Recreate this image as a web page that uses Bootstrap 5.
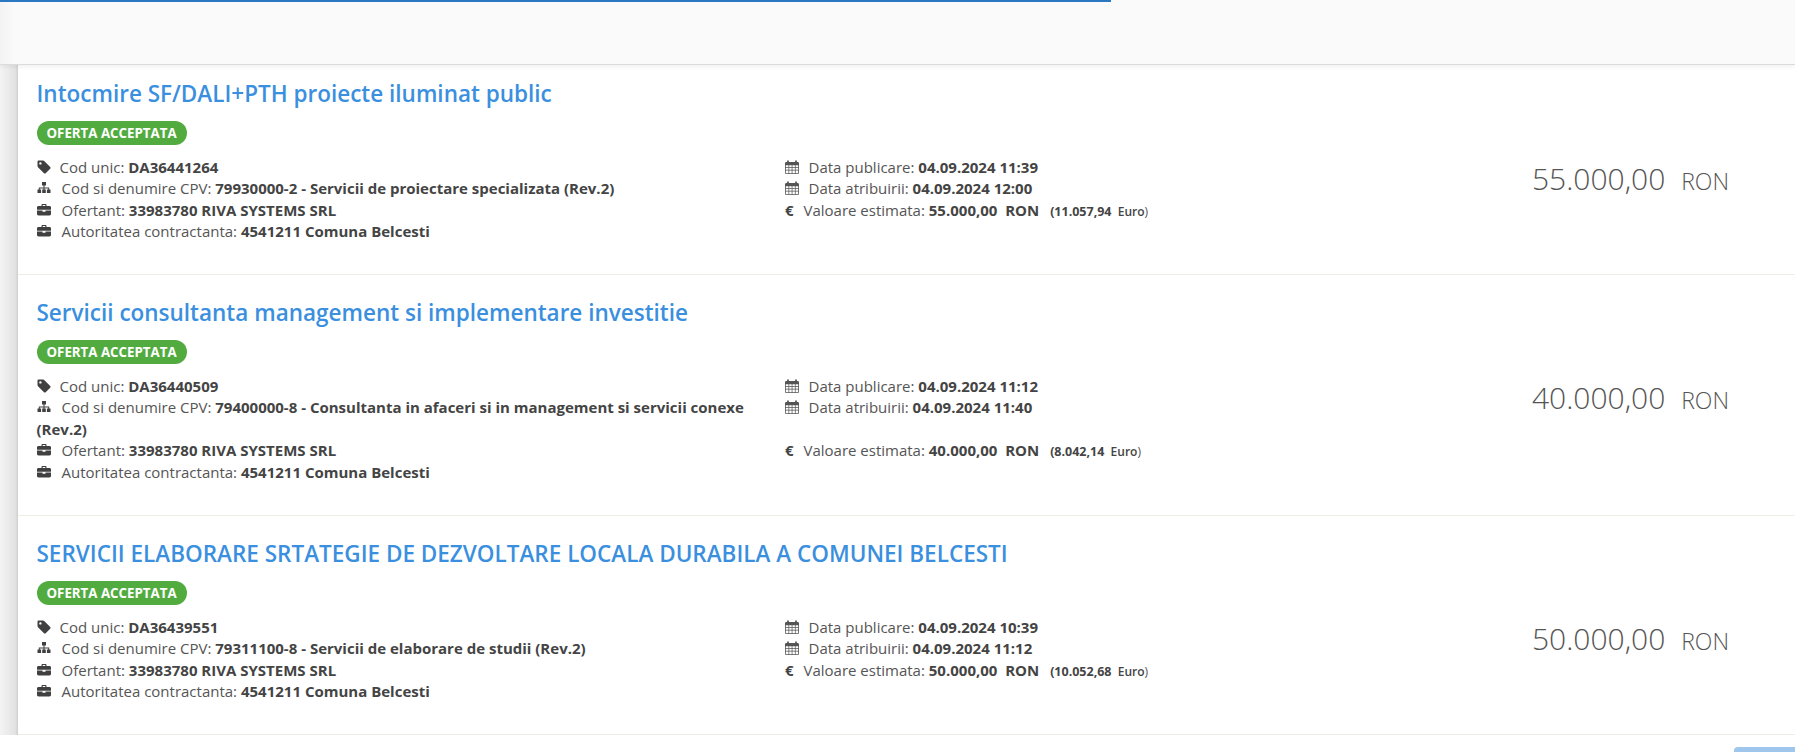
<!DOCTYPE html>
<html lang="ro">
<head>
    <meta charset="UTF-8">
    <title>Achizitii directe</title>
    <link href="https://cdn.jsdelivr.net/npm/bootstrap@5.3.0/dist/css/bootstrap.min.css" rel="stylesheet">
    <style>
        html, body { height: 100%; overflow: hidden; }
        body { font-family: "Open Sans", "Liberation Sans", sans-serif; font-size: 15px; line-height: 21.4px; color: #555; background: #fff; }
        .top-strip { height: 65px; background: linear-gradient(to right, #f3f3f3, #fafafa 14px); border-bottom: 1px solid #dcdcdc; box-shadow: 0 2px 4px rgba(0,0,0,.06); position: relative; z-index: 2; }
        .load-bar { width: 1111px; height: 2px; background: #2b78c2; }
        .side-strip { width: 18px; flex: none; background: linear-gradient(to right, #f4f4f4, #e2e2e2 85%, #cfcfcf); }
        .result-item { height: 219px; padding: 23.5px 0 0 18.500px; border-bottom: 1px solid #eeeee6; }
        .result-item:first-child { height: 210px; padding-top: 14.5px; }
        .result-item.tall { height: 241px; }
        .result-title { font-size: 22.500px; line-height: 28px; font-weight: 600; color: #3a8fde; text-decoration: none; display: block; }
        .status-pill { display: inline-block; height: 24px; padding: 0 10px; margin-top: 13.500px; border-radius: 12px; background: #52ab3f; color: #fff; font-size: 13.300px; line-height: 24px; font-weight: 700; }
        .facts { display: grid; grid-template-columns: 748.500px 1fr; margin-top: 12px; }
        .facts > div { padding-right: 4px; }
        .facts b { font-weight: 700; color: #444; }
        .ico { width: 14px; height: 14px; fill: #404040; vertical-align: -1px; margin-right: 11px; }
        .ico.tag-ico { margin-right: 9px; }
        .ico.cal-ico { fill: #555; margin-right: 9.500px; }
        .eur { font-weight: 700; color: #444; margin-right: 6px; }
        .tiny { font-size: 12px; line-height: 1; margin-left: 7px; }
        .tiny b { font-size: 12.500px; }
        .tiny b.unit { font-size: 12px; font-weight: 600; }
        .price-col { width: 500px; flex: none; padding: 80px 66px 0 0; text-align: right; font-weight: 300; color: #555; font-size: 30px; line-height: 38px; }
        .price-col small { font-size: 23px; margin-left: 8px; }
        .scroll-btn { position: fixed; right: 0; bottom: 0; width: 61px; height: 5px; background: #9fc6ec; border-top-left-radius: 4px; }
    </style>
</head>
<body>
    <svg width="0" height="0" class="position-absolute">
        <symbol id="i-tag" viewBox="0 0 14 14"><path fill-rule="evenodd" d="M.5 1.500a1 1 0 0 1 1-1h4.600c.4 0 .8.2 1.100.5l6 6c.5.5.5 1.200 0 1.700l-4.500 4.500c-.5.5-1.200.5-1.700 0l-6-6a1.600 1.600 0 0 1-.5-1.100zM3.400 2.200a1.200 1.200 0 1 0 0 2.400 1.200 1.200 0 0 0 0-2.400z"/></symbol>
        <symbol id="i-map" viewBox="0 0 14 14"><path d="M5 1h4v3.400H7.500v2h4.700v2.200h1.300V12H9.900V8.600h1.300V7.400h-3.700v1.200h1.300V12H5.200V8.600h1.300V7.400H2.800v1.200h1.300V12H.5V8.600h1.300V6.400h4.700v-2H5z"/></symbol>
        <symbol id="i-case" viewBox="0 0 14 14"><path fill-rule="evenodd" d="M4.500 2.900V2c0-.6.500-1 1-1h3c.5 0 1 .4 1 1v.900h3c.8 0 1.500.6 1.500 1.300v2.600H0V4.200c0-.7.700-1.300 1.500-1.300zM5.700 2.900h2.600v-.8H5.700zM0 7.600h5.500v1.200h3V7.600H14v3.500c0 .8-.7 1.400-1.500 1.400h-11C.7 12.500 0 11.900 0 11.100z"/></symbol>
        <symbol id="i-cal" viewBox="0 0 14 14"><path fill-rule="evenodd" d="M3 .3c.5 0 .9.4.9.9V2h6.200v-.8c0-.5.400-.9.900-.9s.9.4.9.9V2h.8c.7 0 1.300.6 1.300 1.300v9.400c0 .7-.6 1.300-1.300 1.300H1.300C.6 14 0 13.400 0 12.700V3.300C0 2.600.6 2 1.300 2h.8v-.8c0-.5.400-.9.900-.9zM.8 5.200v1.900h2.700V5.200zM4.200 5.200v1.900h2.500V5.200zM7.400 5.200v1.900h2.500V5.200zM10.600 5.200v1.900h2.600V5.200zM.8 7.800v2h2.700v-2zM4.200 7.800v2h2.500v-2zM7.400 7.800v2h2.500v-2zM10.600 7.800v2h2.600v-2zM.8 10.500v2.700h2.700v-2.700zM4.200 10.500v2.700h2.500v-2.700zM7.400 10.500v2.700h2.500v-2.700zM10.600 10.500v2.700h2.600v-2.700z"/></symbol>
    </svg>

    <div class="top-strip"><div class="load-bar"></div></div>

    <div class="d-flex">
        <div class="side-strip"></div>
        <div class="flex-grow-1" id="results"></div>
    </div>
    <div class="scroll-btn"></div>

    <script>
        const offers = [
            { title: "Intocmire SF/DALI+PTH proiecte iluminat public", cod: "DA36441264", cpv: "79930000-2 - Servicii de proiectare specializata (Rev.2)", pub: "04.09.2024 11:39", atr: "04.09.2024 12:00", val: "55.000,00", eur: "11.057,94" },
            { title: "Servicii consultanta management si implementare investitie", cod: "DA36440509", cpv: "79400000-8 - Consultanta in afaceri si in management si servicii conexe (Rev.2)", pub: "04.09.2024 11:12", atr: "04.09.2024 11:40", val: "40.000,00", eur: "8.042,14", tall: true },
            { title: "SERVICII ELABORARE SRTATEGIE DE DEZVOLTARE LOCALA DURABILA A COMUNEI BELCESTI", cod: "DA36439551", cpv: "79311100-8 - Servicii de elaborare de studii (Rev.2)", pub: "04.09.2024 10:39", atr: "04.09.2024 11:12", val: "50.000,00", eur: "10.052,68" }
        ];
        const icon = (name, cls = '') => `<svg class="ico ${cls}"><use href="#i-${name}"></use></svg>`;

        document.getElementById('results').innerHTML = offers.map(o => `
            <div class="result-item d-flex${o.tall ? ' tall' : ''}">
                <div class="flex-grow-1">
                    <a href="#" class="result-title">${o.title}</a>
                    <span class="status-pill">OFERTA ACCEPTATA</span>
                    <div class="facts">
                        <div>${icon('tag', 'tag-ico')}Cod unic: <b>${o.cod}</b></div>
                        <div>${icon('cal', 'cal-ico')}Data publicare: <b>${o.pub}</b></div>
                        <div>${icon('map')}Cod si denumire CPV: <b>${o.cpv}</b></div>
                        <div>${icon('cal', 'cal-ico')}Data atribuirii: <b>${o.atr}</b></div>
                        <div>${icon('case')}Ofertant: <b>33983780 RIVA SYSTEMS SRL</b></div>
                        <div><span class="eur">€</span> Valoare estimata: <b>${o.val}&nbsp; RON</b> <span class="tiny"><b>(${o.eur}</b> &nbsp;<b class="unit">Euro</b>)</span></div>
                        <div>${icon('case')}Autoritatea contractanta: <b>4541211 Comuna Belcesti</b></div>
                        <div></div>
                    </div>
                </div>
                <div class="price-col">${o.val} <small>RON</small></div>
            </div>`).join('');
    </script>
    <script src="https://cdn.jsdelivr.net/npm/bootstrap@5.3.0/dist/js/bootstrap.bundle.min.js"></script>
</body>
</html>
